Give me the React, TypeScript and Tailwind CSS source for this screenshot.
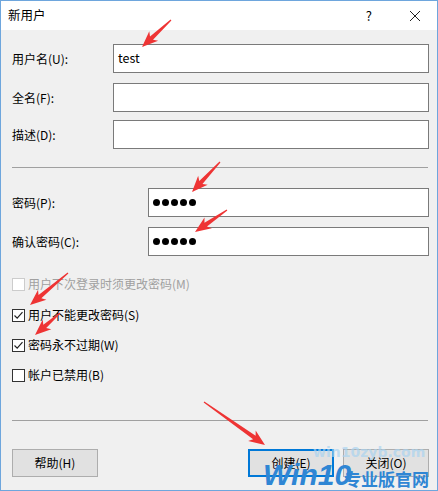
import React from 'react';

const font = { fontFamily: '"Microsoft YaHei UI", "Noto Sans CJK SC", "Noto Sans", sans-serif' };

function Arrow({ x1, y1, x2, y2 }: { x1: number; y1: number; x2: number; y2: number }) {
  // tapered red annotation arrow from tail (x1,y1) to tip (x2,y2)
  const dx = x2 - x1;
  const dy = y2 - y1;
  const len = Math.hypot(dx, dy);
  const ux = dx / len;
  const uy = dy / len;
  const nx = -uy;
  const ny = ux;
  const head = Math.min(16, len * 0.55);
  const bx = x2 - ux * head;
  const by = y2 - uy * head;
  const pts = [
    [x1 + nx * 0.6, y1 + ny * 0.6],
    [bx + ux * 3 + nx * 2.2, by + uy * 3 + ny * 2.2],
    [bx + nx * 6.5, by + ny * 6.5],
    [x2, y2],
    [bx - nx * 6.5, by - ny * 6.5],
    [bx + ux * 3 - nx * 2.2, by + uy * 3 - ny * 2.2],
    [x1 - nx * 0.6, y1 - ny * 0.6],
  ]
    .map((p) => p.join(','))
    .join(' ');
  return <polygon points={pts} fill="#ee3434" />;
}

function Field({ label, top, left, children }: { label: string; top: string; left: string; children?: React.ReactNode }) {
  return (
    <div className={`flex items-center ${top}`}>
      <span className={`${left} shrink-0`}>{label}</span>
      <div className="flex-1 h-[29px] bg-white border border-[#7a7a7a] flex items-center px-[3px]">{children}</div>
    </div>
  );
}

function Dots() {
  return (
    <div className="flex gap-[2px] pl-[1px]">
      {[0, 1, 2, 3, 4].map((i) => (
        <span key={i} className="w-[7px] h-[7px] rounded-full bg-black" />
      ))}
    </div>
  );
}

function Check({ label, checked, disabled, top }: { label: string; checked?: boolean; disabled?: boolean; top: string }) {
  return (
    <div className={`flex items-center gap-[3px] h-[16px] ${top}`}>
      <span
        className={`w-[13px] h-[13px] bg-white border flex items-center justify-center ${
          disabled ? 'border-[#cccccc]' : 'border-[#333333]'
        }`}
      >
        {checked && (
          <svg width="11" height="11" viewBox="0 0 11 11">
            <path d="M1.5 5.5 L4.2 8.2 L9.5 2.2" fill="none" stroke="#222" strokeWidth="1.2" />
          </svg>
        )}
      </span>
      <span className={disabled ? 'text-[#a0a0a0]' : 'text-black'}>{label}</span>
    </div>
  );
}

export default function App() {
  return (
    <div
      className="relative w-[438px] h-[491px] border border-[#6ea6dd] flex flex-col text-[12px] text-black overflow-hidden"
      style={font}
    >
      <div className="h-[29px] bg-white flex items-center pl-[7px] shrink-0">
        <span className="text-[12.5px]">新用户</span>
        <span className="ml-auto mr-[37px] text-[13px]">?</span>
        <svg width="12" height="12" viewBox="0 0 12 12" className="mr-[16px]">
          <path d="M1 1 L11 11 M11 1 L1 11" stroke="#222" strokeWidth="1" />
        </svg>
      </div>

      <div className="flex-1 bg-[#f0f0f0] pl-[11px] pr-[8px] flex flex-col">
        <Field label="用户名(U):" top="mt-[14px]" left="w-[101px]">
          <span className="text-[12.5px] pl-[1px]">test</span>
        </Field>
        <Field label="全名(F):" top="mt-[10px]" left="w-[101px]" />
        <Field label="描述(D):" top="mt-[8px]" left="w-[101px]" />

        <div className="mt-[18px] h-px bg-[#a0a0a0] mr-[1px]" />

        <Field label="密码(P):" top="mt-[20px]" left="w-[136px]">
          <Dots />
        </Field>
        <Field label="确认密码(C):" top="mt-[10px]" left="w-[136px]">
          <Dots />
        </Field>

        <Check label="用户下次登录时须更改密码(M)" disabled top="mt-[20px]" />
        <Check label="用户不能更改密码(S)" checked top="mt-[15px]" />
        <Check label="密码永不过期(W)" checked top="mt-[14px]" />
        <Check label="帐户已禁用(B)" top="mt-[14px]" />

        <div className="mt-[37px] h-px bg-[#a0a0a0] mr-[1px]" />

        <div className="mt-[28px] flex items-center">
          <button className="w-[86px] h-[28px] bg-[#e1e1e1] border border-[#adadad]">帮助(H)</button>
          <button className="ml-auto w-[86px] h-[28px] bg-[#e1e1e1] border-2 border-[#0078d7]">创建(E)</button>
          <button className="ml-[9px] w-[86px] h-[28px] bg-[#e1e1e1] border border-[#adadad]">关闭(O)</button>
        </div>
      </div>

      <span className="absolute left-[312px] top-[444px] text-[14px] font-bold text-[#a9d3f0]/70 leading-none" style={{ fontFamily: 'Verdana, "DejaVu Sans", sans-serif' }}>
        win10zyb.com
      </span>
      <span className="absolute left-[262px] top-[459px] text-[30px] font-bold italic text-[#2f86d4] leading-none" style={{ fontFamily: '"Liberation Sans", Arial, sans-serif' }}>
        Win10
      </span>
      <span className="absolute left-[343px] top-[469px] text-[17px] font-bold text-[#2f86d4] leading-none" style={font}>
        专业版官网
      </span>

      <svg className="absolute left-0 top-0 pointer-events-none" width="438" height="491">
        <Arrow x1={170} y1={19} x2={141} y2={46} />
        <Arrow x1={219} y1={161} x2={191} y2={191} />
        <Arrow x1={226} y1={209} x2={194} y2={231} />
        <Arrow x1={67} y1={272} x2={29} y2={304} />
        <Arrow x1={59} y1={312} x2={34} y2={334} />
        <Arrow x1={203} y1={401} x2={264} y2={444} />
      </svg>
    </div>
  );
}
